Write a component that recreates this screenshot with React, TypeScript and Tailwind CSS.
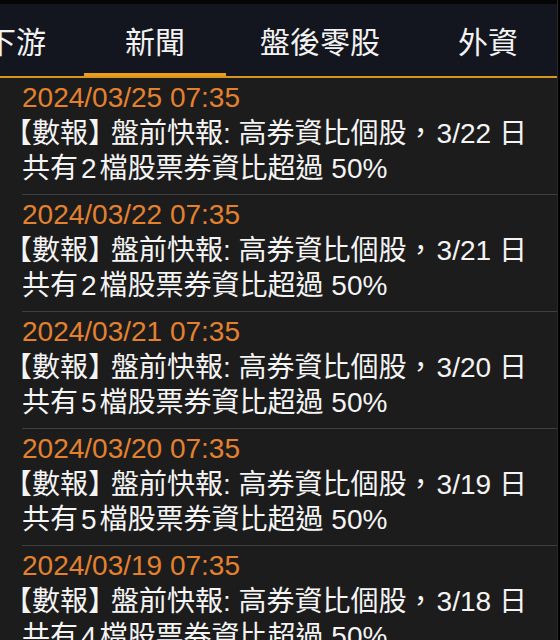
import React from 'react'

type NewsItem = {
  date: string
  day: string
  count: string
}

const tabs = [
  { label: '下游', width: 'w-[136px] ml-[-52px]', active: false },
  { label: '新聞', width: 'w-[142px]', active: true },
  { label: '盤後零股', width: 'w-[188px]', active: false },
  { label: '外資', width: 'w-[148px]', active: false },
]

const news: NewsItem[] = [
  { date: '2024/03/25 07:35', day: '3/22', count: '2' },
  { date: '2024/03/22 07:35', day: '3/21', count: '2' },
  { date: '2024/03/21 07:35', day: '3/20', count: '5' },
  { date: '2024/03/20 07:35', day: '3/19', count: '5' },
  { date: '2024/03/19 07:35', day: '3/18', count: '4' },
]

const font = "font-['Liberation_Sans','Noto_Sans_CJK_TC',sans-serif]"

function TabBar() {
  return (
    <div className="flex h-[74px] shrink-0 overflow-hidden border-b-2 border-[#d8951f] bg-[#13161e]">
      {tabs.map((t) => (
        <div key={t.label} className={`relative flex shrink-0 items-center justify-center ${t.width}`}>
          <span className="text-[30px] leading-none text-[#f2f2f2] font-['Noto_Sans_CJK_TC',sans-serif]">
            {t.label}
          </span>
          {t.active && <div className="absolute bottom-0 left-0 h-[3px] w-full bg-[#e99f1c]" />}
        </div>
      ))}
    </div>
  )
}

function NewsRow({ item }: { item: NewsItem }) {
  return (
    <div className="ml-[22px] shrink-0 border-b border-[#3f3f3f] pt-[1px] pb-[8px]">
      <div className="text-[28px] leading-[37px] text-[#e4812f] whitespace-nowrap">{item.date}</div>
      <p className="text-[28px] leading-[35px] text-[#f4f4f4] whitespace-nowrap">
        <span className="ml-[-4px] [font-feature-settings:'halt']">【</span>數報<span className="tracking-[-5px]">】</span>
        盤前快報: 高券資比個股，
        <span className="ml-[2px] mr-[8px]">{item.day}</span>日
        <br />
        共有<span className="mx-[3px]">{item.count}</span>檔股票券資比超過 50%
      </p>
    </div>
  )
}

export default function App() {
  return (
    <div className={`flex h-[640px] w-[560px] overflow-hidden bg-black ${font}`}>
      <div className="flex w-[557px] flex-col">
        <div className="h-[4px] shrink-0 bg-[#050505]" />
        <TabBar />
        <div className="flex flex-1 flex-col bg-[#1c1c1c]">
          {news.map((n) => (
            <NewsRow key={n.date} item={n} />
          ))}
        </div>
      </div>
      <div className="w-px bg-[#2a2a2a]" />
    </div>
  )
}
